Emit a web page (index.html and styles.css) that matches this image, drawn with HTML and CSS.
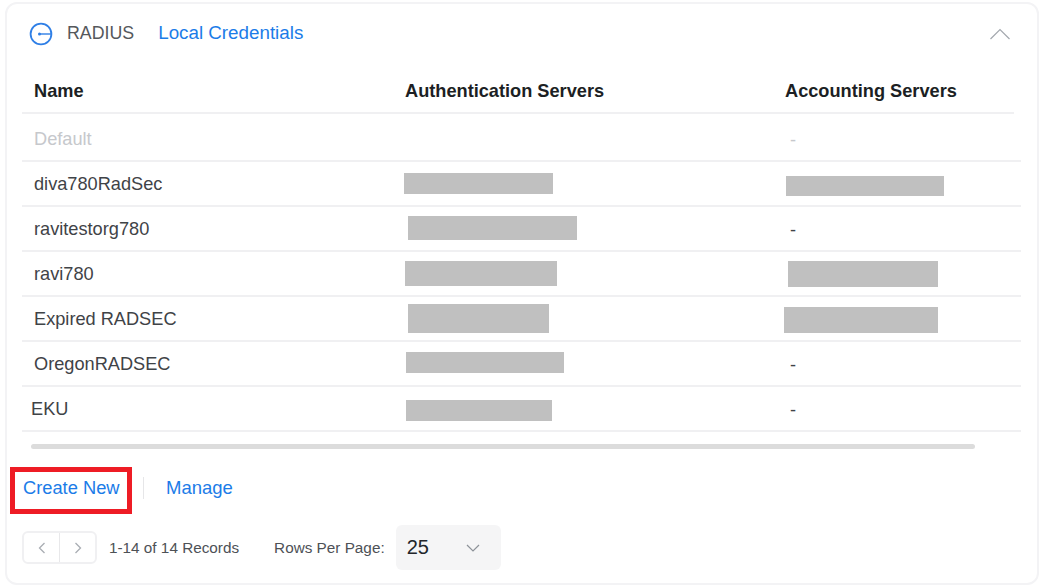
FILE: index.html
```html
<!doctype html>
<html lang="en">
<head>
	<meta charset="UTF-8">
	<title>RADIUS</title>
	<link rel="stylesheet" href="styles.css">
</head>
<body>
	<div class="card">
		<div class="head">
			<svg class="radius-icon" width="24" height="24" viewBox="0 0 24 24" fill="none" stroke="#2f7fe6" stroke-width="1.8">
				<circle cx="12" cy="12" r="10.4"/>
				<path d="M10 12H22" stroke-width="1.4"/>
				<circle cx="10.5" cy="12" r="1.5" fill="#2f7fe6" stroke="none"/>
			</svg>
			<span class="title">RADIUS</span>
			<a class="link tab" href="#">Local Credentials</a>
			<svg class="collapse" width="22" height="12" viewBox="0 0 22 12" fill="none" stroke="#a3a8ae" stroke-width="1.2">
				<path d="M1.5 11L11 1.5L20.5 11"/>
			</svg>
		</div>
		<div class="row row-head">
			<div class="name">Name</div>
			<div class="auth">Authentication Servers</div>
			<div class="acct">Accounting Servers</div>
		</div>
		<div class="row row-off">
			<div class="name">Default</div>
			<div class="auth"></div>
			<div class="acct dash">-</div>
		</div>
		<div class="row">
			<div class="name">diva780RadSec</div>
			<div class="auth"><span class="redact r1"></span></div>
			<div class="acct"><span class="redact r7"></span></div>
		</div>
		<div class="row">
			<div class="name">ravitestorg780</div>
			<div class="auth"><span class="redact r2"></span></div>
			<div class="acct dash">-</div>
		</div>
		<div class="row">
			<div class="name">ravi780</div>
			<div class="auth"><span class="redact r3"></span></div>
			<div class="acct"><span class="redact r8"></span></div>
		</div>
		<div class="row">
			<div class="name">Expired RADSEC</div>
			<div class="auth"><span class="redact r4"></span></div>
			<div class="acct"><span class="redact r9"></span></div>
		</div>
		<div class="row">
			<div class="name">OregonRADSEC</div>
			<div class="auth"><span class="redact r5"></span></div>
			<div class="acct dash">-</div>
		</div>
		<div class="row">
			<div class="name name-eku">EKU</div>
			<div class="auth"><span class="redact r6"></span></div>
			<div class="acct dash">-</div>
		</div>
		<div class="scrollbar"></div>
		<div class="actions">
			<a class="link create" href="#">Create New</a>
			<span class="sep"></span>
			<a class="link manage" href="#">Manage</a>
		</div>
		<div class="pager">
			<div class="arrows">
				<button class="arrow">
					<svg width="8" height="12" viewBox="0 0 8 12" fill="none" stroke="#a9adb3" stroke-width="1.3"><path d="M6.5 1L1.5 6L6.5 11"/></svg>
				</button>
				<button class="arrow">
					<svg width="8" height="12" viewBox="0 0 8 12" fill="none" stroke="#a9adb3" stroke-width="1.3"><path d="M1.5 1L6.5 6L1.5 11"/></svg>
				</button>
			</div>
			<span class="records">1-14 of 14 Records</span>
			<span class="rows-label">Rows Per Page:</span>
			<div class="select">
				<span>25</span>
				<svg width="14" height="8" viewBox="0 0 14 8" fill="none" stroke="#8d9299" stroke-width="1.2"><path d="M1 1L7 7L13 1"/></svg>
			</div>
		</div>
	</div>
</body>
</html>
```

FILE: styles.css
```css
*{
	box-sizing:border-box;
	margin:0;
	padding:0;
}
body{
	width:1044px;
	height:587px;
	overflow:hidden;
	background:#fff;
	padding:2px 5px 0 5px;
	font-family:"Liberation Sans",Arial,sans-serif;
	color:#3f4347;
}
.card{
	height:583px;
	border:2px solid #f3f3f5;
	border-radius:12px;
	padding:0 0 0 15px;
}
.head{
	height:58px;
	display:flex;
	align-items:center;
	padding-left:7px;
	padding-right:26px;
}
.radius-icon{
	margin-right:14px;
	margin-top:2px;
}
.title{
	font-size:17.8px;
	color:#55585c;
}
.link{
	color:#1b7ce8;
	font-size:18.5px;
	text-decoration:none;
}
.tab{
	margin-left:24px;
	font-size:18.8px;
}
.collapse{
	margin-left:auto;
	margin-top:2px;
}
.row{
	display:flex;
	height:45px;
	width:999px;
	padding-top:2px;
	align-items:center;
	border-bottom:2px solid #f0f0f2;
	font-size:18.2px;
}
.name{
	width:383px;
	padding-left:12px;
}
.name-eku{
	padding-left:9px;
}
.auth{
	width:380px;
}
.row-head{
	height:52px;
	width:992px;
	padding-top:9px;
	font-weight:bold;
	color:#1c1f24;
}
.row-off{
	height:48px;
	padding-top:4px;
	color:#c6c8cc;
}
.dash{
	padding-left:5px;
	padding-top:2px;
}
.redact{
	display:block;
	background:#c0c0c0;
}
.r1{width:149px;height:21px;margin-left:-1px;margin-top:-3px;}
.r2{width:169px;height:24px;margin-left:3px;margin-top:-4px;}
.r3{width:152px;height:25px;margin-top:-2px;}
.r4{width:141px;height:29px;margin-left:3px;margin-top:-2px;}
.r5{width:158px;height:21px;margin-left:1px;margin-top:-4px;}
.r6{width:146px;height:21px;margin-left:1px;margin-top:1px;}
.r7{width:158px;height:20px;margin-left:1px;margin-top:3px;}
.r8{width:150px;height:26px;margin-left:3px;margin-top:-2px;}
.r9{width:154px;height:26px;margin-left:-1px;}
.scrollbar{
	width:944px;
	height:5px;
	margin:12px 0 0 9px;
	background:#dcdcdc;
	border-radius:3px;
}
.actions{
	display:flex;
	align-items:flex-start;
	height:47px;
	margin:18px 0 0 -12px;
}
.create{
	border:5px solid #ee1c25;
	padding:5px 8px 11px 8px;
	width:122px;
	height:47px;
	white-space:nowrap;
	font-size:18.3px;
}
.sep{
	width:1px;
	height:22px;
	background:#e6e6e8;
	margin:10px 22px 0 11px;
}
.manage{
	padding-top:10px;
}
.pager{
	display:flex;
	align-items:center;
	margin-top:11px;
}
.arrows{
	display:flex;
	width:75px;
	height:33px;
	border:2px solid #f0f0f2;
	border-radius:6px;
}
.arrow{
	flex:1;
	border:none;
	background:none;
	display:flex;
	align-items:center;
	justify-content:center;
}
.arrow + .arrow{
	border-left:1px solid #e8e8ea;
}
.records{
	margin-left:12px;
	font-size:15.3px;
	color:#4d5156;
}
.rows-label{
	margin-left:35px;
	font-size:15.3px;
	color:#4d5156;
}
.select{
	display:flex;
	align-items:center;
	justify-content:space-between;
	width:105px;
	height:45px;
	margin-left:11px;
	padding:0 21px 0 11px;
	background:#f5f5f6;
	border-radius:6px;
	font-size:20px;
	color:#23262b;
}
```
